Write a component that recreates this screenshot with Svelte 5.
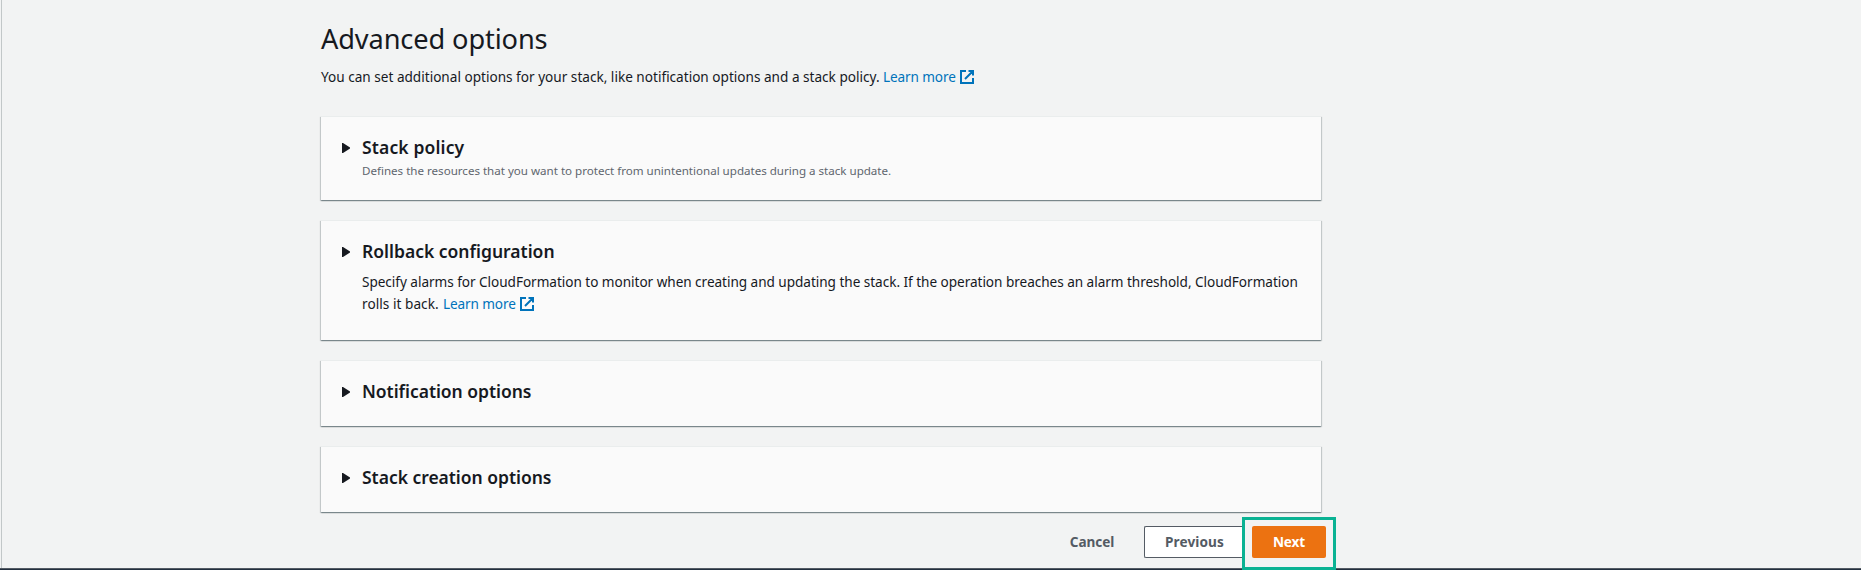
<script>
  const panels = [
    { title: 'Stack policy', track: 0.14, hint: 'Defines the resources that you want to protect from unintentional updates during a stack update.' },
    { title: 'Rollback configuration', track: 0, lines: ['Specify alarms for CloudFormation to monitor when creating and updating the stack. If the operation breaches an alarm threshold, CloudFormation', 'rolls it back.'] },
    { title: 'Notification options', track: -0.04 },
    { title: 'Stack creation options', track: -0.03 }
  ];
</script>

{#snippet learnMore()}
  <a class="link" href="#learn"><span>Learn more</span><svg width="16" height="16" viewBox="0 0 16 16" fill="none" stroke="currentColor" stroke-width="2"><path d="M14 9v5H2V2h5M9.5 2H14v4.5M6 10l7.5-7.5" /></svg></a>
{/snippet}

<div class="page">
  <main>
    <h1>Advanced options</h1>
    <p class="intro"><span>You can set additional options for your stack, like notification options and a stack policy.</span>{@render learnMore()}</p>
    <div class="panels">
      {#each panels as p}
        <section class:hinted={p.hint} class:detailed={p.lines}>
          <svg class="caret" width="8" height="10" viewBox="0 0 8 10"><path d="M0 0h1l7 4.5v1L1 10H0z" fill="#16191f" /></svg>
          <div class="content">
            <h2 style="letter-spacing:{p.track}px">{p.title}</h2>
            {#if p.hint}<p class="hint">{p.hint}</p>{/if}
            {#if p.lines}
              <div class="body">
                <p>{p.lines[0]}</p>
                <p class="second"><span>{p.lines[1]}</span>{@render learnMore()}</p>
              </div>
            {/if}
          </div>
        </section>
      {/each}
    </div>
    <footer>
      <button class="cancel">Cancel</button>
      <button class="previous">Previous</button>
      <div class="highlight"><button class="next">Next</button></div>
    </footer>
  </main>
</div>

<style>
  :global(body) { overflow: hidden; }
  .page {
    box-sizing: border-box;
    width: 1861px;
    height: 570px;
    padding: 21px 0 0 320px;
    background:
      linear-gradient(#545b64, #545b64) 0 568px / 100% 1px no-repeat,
      linear-gradient(#232f3e, #232f3e) 0 569px / 100% 1px no-repeat,
      linear-gradient(#c2c7c8, #c2c7c8) 1px 0 / 1px 568px no-repeat,
      #f2f3f3;
    font: 13.6px/22px 'Noto Sans', sans-serif;
    color: #16191f;
  }
  main { width: 1017px; }
  h1, h2, p { margin: 0; white-space: nowrap; }
  h1 { padding-left: 1px; font-size: 27.2px; line-height: 36px; font-weight: 400; letter-spacing: -0.12px; }
  .intro { display: flex; gap: 4px; margin-top: 9px; padding-left: 1px; }
  .intro > span { width: 558px; }
  .link { display: flex; align-items: center; gap: 4px; color: #0073bb; text-decoration: none; letter-spacing: -0.12px; }
  .link span { width: 72px; }
  .panels { display: flex; flex-direction: column; gap: 20px; width: 1000px; margin: 28px 0 0 1px; }
  section {
    display: flex;
    gap: 12px;
    padding: 19px 20px 24px 21px;
    border-top: 1px solid #eaeded;
    background: #fafafa;
    box-shadow: 0 1px 1px 0 rgba(0, 28, 36, .3), 1px 1px 1px 0 rgba(0, 28, 36, .15), -1px 1px 1px 0 rgba(0, 28, 36, .15);
  }
  .hinted { padding-bottom: 20px; }
  .detailed { padding-bottom: 25px; }
  .caret { flex: none; margin-top: 7px; }
  h2 { font-size: 17.5px; line-height: 22px; font-weight: 600; }
  .hint { margin-top: 4px; font-size: 11.6px; line-height: 18px; letter-spacing: -0.012px; color: #5f666e; }
  .body { margin-top: 9px; letter-spacing: -0.042px; }
  .second { display: flex; gap: 4px; }
  .second > span { width: 77px; letter-spacing: 0.05px; }
  footer { display: flex; height: 53px; margin-top: 5px; }
  button { box-sizing: border-box; height: 32px; padding: 0; border: 0; background: none; font: 700 13.6px/30px 'Noto Sans', sans-serif; color: #545b64; }
  .cancel { width: 46px; margin: 9px 29px 0 749px; letter-spacing: -0.1px; }
  .previous { width: 98px; margin-top: 9px; padding-left: 20px; border: 1px solid #545b64; border-right: 0; border-radius: 2px 0 0 2px; background: #fff; text-align: left; letter-spacing: 0.1px; }
  .highlight { box-sizing: border-box; width: 94px; height: 53px; padding: 6px 7px; border: 3px solid #0ab293; background: #f2f3f3; }
  .next { display: block; width: 74px; border-radius: 2px; background: #ec7211; color: #fff; letter-spacing: -0.15px; }
</style>
